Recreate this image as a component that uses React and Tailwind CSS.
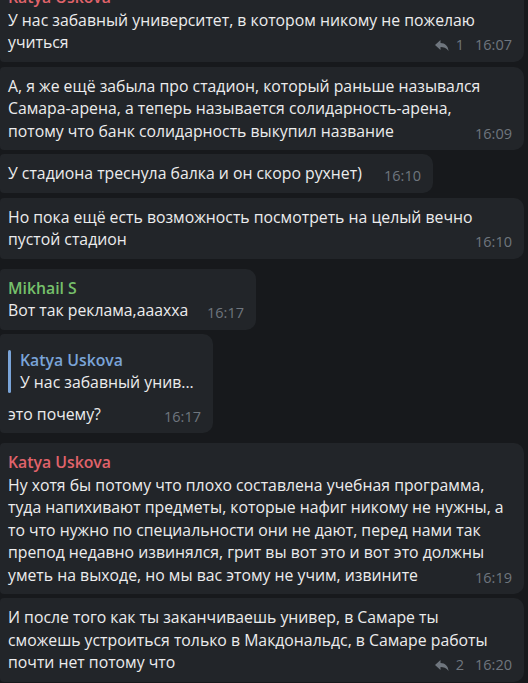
import React from "react";

function ReplyIcon() {
  return (
    <svg width="16" height="13" viewBox="0 0 16 13" className="text-[#6f767e]">
      <path
        d="M6.5 1 L1 6 L6.5 11 L6.5 8 C9.6 8 12.2 8.8 14.6 12 C14 7 11.2 4.3 6.5 4.1 Z"
        fill="currentColor"
      />
    </svg>
  );
}

function Meta({ time, replies }) {
  return (
    <span className="ml-auto flex items-center pl-3 translate-y-[3px] text-[14.5px] leading-[22px] text-[#6f767e] whitespace-nowrap">
      {replies ? (
        <>
          <ReplyIcon />
          <span className="ml-[6px] mr-[11px]">{replies}</span>
        </>
      ) : null}
      <span>{time}</span>
    </span>
  );
}

function Bubble({ width, mt, name, nameColor, lines, time, replies, quote }) {
  const last = lines[lines.length - 1];
  const rest = lines.slice(0, -1);
  return (
    <div
      className={`${width} ${mt} bg-[#222529] rounded-r-[10px] rounded-l-[4px] pl-2 pr-3 ${quote ? "pt-4" : "pt-2"} pb-2 text-[#ececed] text-[15.8px] leading-[22.5px]`}
    >
      {name ? (
        <div className={`${nameColor} font-semibold text-[15.8px] leading-[22.5px]`}>{name}</div>
      ) : null}
      {quote ? (
        <div className="flex mb-[10px]">
          <div className="w-[3px] bg-[#7aa4d8] rounded-sm" />
          <div className="pl-[9px]">
            <div className="text-[#7aa4d8] font-semibold text-[15.8px] leading-[21px]">{quote.name}</div>
            <div className="text-[15.8px] leading-[22px] whitespace-nowrap">{quote.text}</div>
          </div>
        </div>
      ) : null}
      {rest.map((l, i) => (
        <div key={i} className="whitespace-nowrap">{l}</div>
      ))}
      <div className="flex items-center">
        <span className="whitespace-nowrap">{last}</span>
        <Meta time={time} replies={replies} />
      </div>
    </div>
  );
}

export default function App() {
  return (
    <div className="w-[528px] h-[683px] overflow-hidden bg-[#17191c] font-['Open_Sans',sans-serif]">
      <div className="flex flex-col mt-[-22px]">
        <Bubble
          width="w-[524px]"
          mt=""
          name="Katya Uskova"
          nameColor="text-[#e0636b]"
          lines={["У нас забавный университет, в котором никому не пожелаю", "учиться"]}
          time="16:07"
          replies="1"
        />
        <Bubble
          width="w-[524px]"
          mt="mt-[5px]"
          lines={[
            "А, я же ещё забыла про стадион, который раньше назывался",
            "Самара-арена, а теперь называется солидарность-арена,",
            "потому что банк солидарность выкупил название",
          ]}
          time="16:09"
        />
        <Bubble
          width="w-[433px]"
          mt="mt-[4px]"
          lines={["У стадиона треснула балка и он скоро рухнет)"]}
          time="16:10"
        />
        <Bubble
          width="w-[524px]"
          mt="mt-[5px]"
          lines={["Но пока ещё есть возможность посмотреть на целый вечно", "пустой стадион"]}
          time="16:10"
        />
        <Bubble
          width="w-[256px]"
          mt="mt-[10px]"
          name="Mikhail S"
          nameColor="text-[#76c06b]"
          lines={["Вот так реклама,аааxха"]}
          time="16:17"
        />
        <Bubble
          width="w-[213px]"
          mt="mt-[4px]"
          quote={{ name: "Katya Uskova", text: "У нас забавный унив..." }}
          lines={["это почему?"]}
          time="16:17"
        />
        <Bubble
          width="w-[524px]"
          mt="mt-[10px]"
          name="Katya Uskova"
          nameColor="text-[#e0636b]"
          lines={[
            "Ну хотя бы потому что плохо составлена учебная программа,",
            "туда напихивают предметы, которые нафиг никому не нужны, а",
            "то что нужно по специальности они не дают, перед нами так",
            "препод недавно извинялся, грит вы вот это и вот это должны",
            "уметь на выходе, но мы вас этому не учим, извините",
          ]}
          time="16:19"
        />
        <Bubble
          width="w-[524px]"
          mt="mt-[4px]"
          lines={[
            "И после того как ты заканчиваешь универ, в Самаре ты",
            "сможешь устроиться только в Макдональдс, в Самаре работы",
            "почти нет потому что",
          ]}
          time="16:20"
          replies="2"
        />
      </div>
    </div>
  );
}
